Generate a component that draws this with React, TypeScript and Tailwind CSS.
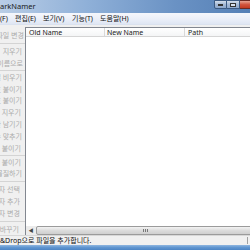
import React from "react";

const FONT = { fontFamily: '"Noto Sans", "Noto Sans CJK KR", sans-serif' };

type Row = { t: string; pr: number } | { sep: true; h: number };

const rows: Row[] = [
  { t: "파일 변경", pr: 1 },
  { sep: true, h: 4 },
  { t: "지우기", pr: 3 },
  { t: "이름으로", pr: 2 },
  { sep: true, h: 2 },
  { t: "열 비우기", pr: 3 },
  { t: "호 붙이기", pr: 3 },
  { t: "호 붙이기", pr: 3 },
  { t: "지우기", pr: 4 },
  { t: "만 남기기", pr: 3 },
  { t: "수 맞추기", pr: 3 },
  { t: "붙이기", pr: 4 },
  { sep: true, h: 2 },
  { t: "명 붙이기", pr: 4 },
  { t: "물질하기", pr: 3 },
  { sep: true, h: 4 },
  { t: "자 선택", pr: 5 },
  { t: "자 추가", pr: 5 },
  { t: "자 변경", pr: 5 },
  { sep: true, h: 4 },
  { t: "바꾸기", pr: 6 },
];

export default function App() {
  return (
    <div
      className="w-[250px] h-[250px] overflow-hidden bg-[#f0f0f0] flex flex-col text-[7px] leading-none"
      style={FONT}
    >
      {/* Title bar */}
      <div className="h-[13px] shrink-0 flex items-start bg-[linear-gradient(90deg,#b9cde6_0%,#8fb0d8_35%,#6a92c4_70%,#5580b6_100%)]">
        <div className="flex-1 h-full flex items-center text-[7.5px] text-[#1a1a1a] pl-0">
          arkNamer
        </div>
        <div className="flex h-[9px] mr-0">
          <div className="w-[13px] h-full border border-[#3c5a82] rounded-bl-[2px] bg-[linear-gradient(180deg,#d3deec_0%,#a4b9d6_50%,#8ea8cc_100%)] flex items-center justify-center">
            <div className="w-[5px] h-[1.5px] bg-white border-[0.5px] border-[#333]" />
          </div>
          <div className="w-[13px] h-full border-y border-r border-[#3c5a82] bg-[linear-gradient(180deg,#d3deec_0%,#a4b9d6_50%,#8ea8cc_100%)] flex items-center justify-center">
            <div className="w-[6px] h-[4px] border border-[#333] bg-white/60" />
          </div>
          <div className="w-[10px] h-full border-y border-l-0 border-[#6e2a22] bg-[linear-gradient(180deg,#e8a493_0%,#d2553e_50%,#c23a22_100%)]" />
        </div>
      </div>

      {/* Menu bar */}
      <div className="h-[12px] shrink-0 flex items-center text-[#111] bg-[linear-gradient(180deg,#f5f7fc_0%,#eaeef8_60%,#dfe6f3_100%)] border-b border-[#dbe2ef]">
        <span className="w-[15px]">(F)</span>
        <span className="w-[28px]">편집(E)</span>
        <span className="w-[29px]">보기(V)</span>
        <span className="w-[28px]">기능(T)</span>
        <span>도움말(H)</span>
      </div>

      {/* Content */}
      <div className="flex-1 flex pt-[2px] min-h-0">
        {/* Left panel */}
        <div className="w-[25px] shrink-0 flex flex-col pt-[3px] text-[#ababab] overflow-hidden">
          {rows.map((r, i) =>
            "sep" in r ? (
              <div key={i} className="flex items-center" style={{ height: r.h }}>
                <div className="w-full h-px bg-[#d4d4d4]" />
              </div>
            ) : (
              <div
                key={i}
                className="h-[12px] flex items-center justify-end whitespace-nowrap overflow-hidden"
                style={{ paddingRight: r.pr }}
              >
                {r.t}
              </div>
            )
          )}
        </div>

        {/* List view */}
        <div className="flex-1 flex flex-col border-l border-t border-[#828790] bg-white min-w-0">
          <div className="h-[9px] shrink-0 flex text-[#222] bg-[linear-gradient(180deg,#ffffff_0%,#f4f5f6_100%)] border-b border-[#d5d5d5]">
            <div className="w-[79px] shrink-0 flex items-center pl-[3px] border-r border-[#d9d9d9]">Old Name</div>
            <div className="w-[80px] shrink-0 flex items-center pl-[2px] border-r border-[#d9d9d9]">New Name</div>
            <div className="flex-1 flex items-center pl-[3px]">Path</div>
          </div>
          <div className="flex-1" />
          {/* Horizontal scrollbar */}
          <div className="h-[9px] shrink-0 flex bg-[#ececec]">
            <div className="w-[10px] flex items-center justify-center text-[#444] text-[5px]">◀</div>
            <div className="flex-1 -mr-[4px] border border-[#9b9b9b] rounded-[2px] bg-[linear-gradient(180deg,#f3f3f3_0%,#dcdcdc_50%,#cfcfcf_100%)] flex items-center justify-center">
              <div className="flex gap-[1px]">
                <div className="w-px h-[3px] bg-[#777]" />
                <div className="w-px h-[3px] bg-[#777]" />
                <div className="w-px h-[3px] bg-[#777]" />
              </div>
            </div>
          </div>
        </div>
      </div>

      {/* Status bar */}
      <div className="h-[10px] shrink-0 flex items-center bg-[#f0f0f0] border-t border-[#d7d7d7] text-[#111]">
        <span className="flex-1 whitespace-nowrap">&amp;Drop으로 파일을 추가합니다.</span>
        <div className="w-px h-[7px] bg-[#a0a0a0] mr-[2px]" />
      </div>

      {/* Bottom frame */}
      <div className="h-[5px] shrink-0 bg-[linear-gradient(180deg,#8fb6e0_0%,#5f95d0_50%,#4c84c4_100%)]" />
    </div>
  );
}
